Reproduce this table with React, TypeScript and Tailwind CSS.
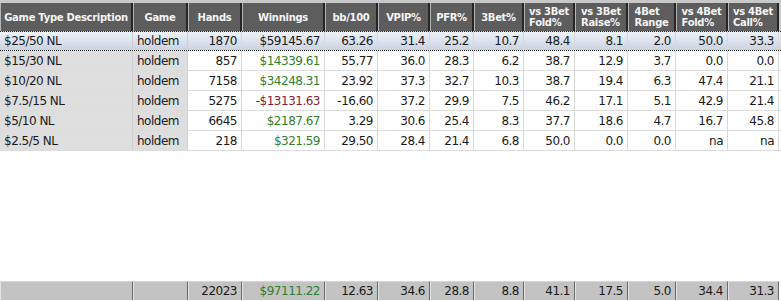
import React from 'react';

type Row = {
  desc: string;
  hands: string;
  win: string;
  bb: string;
  vpip: string;
  pfr: string;
  threeBet: string;
  vs3Fold: string;
  vs3Raise: string;
  fourBet: string;
  vs4Fold: string;
  vs4Call: string;
};

const rows: Row[] = [
  { desc: '$25/50 NL', hands: '1870', win: '$59145.67', bb: '63.26', vpip: '31.4', pfr: '25.2', threeBet: '10.7', vs3Fold: '48.4', vs3Raise: '8.1', fourBet: '2.0', vs4Fold: '50.0', vs4Call: '33.3' },
  { desc: '$15/30 NL', hands: '857', win: '$14339.61', bb: '55.77', vpip: '36.0', pfr: '28.3', threeBet: '6.2', vs3Fold: '38.7', vs3Raise: '12.9', fourBet: '3.7', vs4Fold: '0.0', vs4Call: '0.0' },
  { desc: '$10/20 NL', hands: '7158', win: '$34248.31', bb: '23.92', vpip: '37.3', pfr: '32.7', threeBet: '10.3', vs3Fold: '38.7', vs3Raise: '19.4', fourBet: '6.3', vs4Fold: '47.4', vs4Call: '21.1' },
  { desc: '$7.5/15 NL', hands: '5275', win: '-$13131.63', bb: '-16.60', vpip: '37.2', pfr: '29.9', threeBet: '7.5', vs3Fold: '46.2', vs3Raise: '17.1', fourBet: '5.1', vs4Fold: '42.9', vs4Call: '21.4' },
  { desc: '$5/10 NL', hands: '6645', win: '$2187.67', bb: '3.29', vpip: '30.6', pfr: '25.4', threeBet: '8.3', vs3Fold: '37.7', vs3Raise: '18.6', fourBet: '4.7', vs4Fold: '16.7', vs4Call: '45.8' },
  { desc: '$2.5/5 NL', hands: '218', win: '$321.59', bb: '29.50', vpip: '28.4', pfr: '21.4', threeBet: '6.8', vs3Fold: '50.0', vs3Raise: '0.0', fourBet: '0.0', vs4Fold: 'na', vs4Call: 'na' },
];

const cols = 'grid grid-cols-[133px_55px_54px_83px_53px_52px_44px_50px_51px_53px_48px_52px_51px]';

const headers: string[][] = [
  ['Game Type Description'],
  ['Game'],
  ['Hands'],
  ['Winnings'],
  ['bb/100'],
  ['VPIP%'],
  ['PFR%'],
  ['3Bet%'],
  ['vs 3Bet', 'Fold%'],
  ['vs 3Bet', 'Raise%'],
  ['4Bet', 'Range'],
  ['vs 4Bet', 'Fold%'],
  ['vs 4Bet', 'Call%'],
];

const totals = ['', '', '22023', '$97111.22', '12.63', '34.6', '28.8', '8.8', '41.1', '17.5', '5.0', '34.4', '31.3'];

const font = { fontFamily: '"DejaVu Sans", Verdana, sans-serif' };

const App: React.FC = () => {
  return (
    <div className="w-[781px] h-[301px] bg-white flex flex-col overflow-hidden text-[12px] tracking-[-0.5px] text-[#1a1a1a]" style={font}>
      {/* Header */}
      <div className={`${cols} h-[31px] bg-[#c8c8c8] pt-[3px]`}>
        {headers.map((h, i) => (
          <div
            key={i}
            className="bg-[#5d5d5d] border-l border-[#b5b5b5] border-r-2 border-r-[#262626] flex items-center justify-center text-[#f4f4f4] font-bold text-[10px] leading-[11px] tracking-[-0.3px] whitespace-nowrap"
          >
            <div className="text-left">
              {h.map((line) => (
                <div key={line}>{line}</div>
              ))}
            </div>
          </div>
        ))}
      </div>

      {/* Body */}
      {rows.map((r, i) => {
        const selected = i === 0;
        const winColor = r.win.startsWith('-') ? 'text-[#8a1c34]' : 'text-[#2f7f2f]';
        const cells = [r.hands, r.win, r.bb, r.vpip, r.pfr, r.threeBet, r.vs3Fold, r.vs3Raise, r.fourBet, r.vs4Fold, r.vs4Call];
        return (
          <div
            key={r.desc}
            className={`${cols} h-[20px] ${
              selected
                ? 'bg-gradient-to-b from-[#eef2f8] to-[#c9d3e1] border-y border-dotted border-[#222]'
                : 'border-b border-[#dcdcdc]'
            }`}
          >
            <div className={`px-[4px] flex items-center border-r border-[#d0d0d0] ${selected ? '' : 'bg-[#dedede]'}`}>{r.desc}</div>
            <div className={`px-[4px] flex items-center border-r border-[#d0d0d0] ${selected ? '' : 'bg-[#dedede]'}`}>holdem</div>
            {cells.map((c, j) => (
              <div
                key={j}
                className={`px-[4px] flex items-center justify-end border-r border-[#d8d8d8] ${
                  j === 1 && !selected ? winColor : ''
                }`}
              >
                {c}
              </div>
            ))}
          </div>
        );
      })}

      <div className="flex-1" />

      {/* Totals */}
      <div className={`${cols} h-[19px] mb-[1px]`}>
        {totals.map((t, i) => (
          <div
            key={i}
            className={`bg-[#c3c3c3] border-t border-[#d6d6d6] border-l border-l-[#e4e4e4] border-r border-r-[#6a6a6a] px-[4px] flex items-center justify-end ${
              i === 3 ? 'text-[#2f7f2f]' : ''
            }`}
          >
            {t}
          </div>
        ))}
      </div>
    </div>
  );
};

export default App;
